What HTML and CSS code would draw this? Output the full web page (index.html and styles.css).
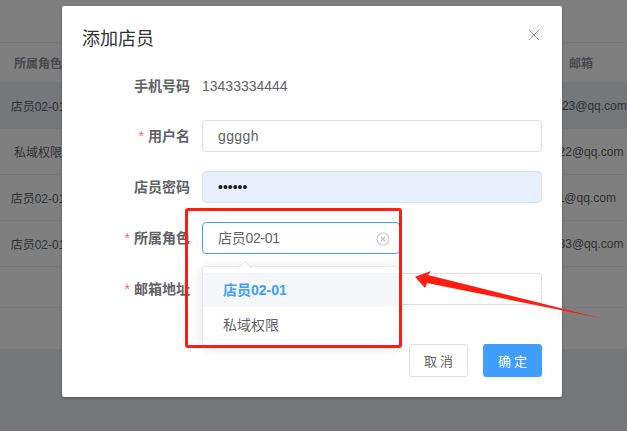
FILE: index.html
```html
<!DOCTYPE html>
<html lang="zh-CN">
<head>
<meta charset="utf-8">
<title>添加店员</title>
<link rel="stylesheet" href="styles.css">
</head>
<body>
<div class="table">
  <div class="row head"><span>所属角色</span><span>邮箱</span></div>
  <div class="row active"><span>店员02-01</span><span>123123@qq.com</span></div>
  <div class="row"><span>私域权限</span><span>12222@qq.com</span></div>
  <div class="row"><span>店员02-01</span><span>111@qq.com</span></div>
  <div class="row"><span>店员02-01</span><span>12333@qq.com</span></div>
  <div class="row blank"></div>
  <div class="pager"></div>
</div>
<div class="mask"></div>
<section class="dialog">
  <header class="dialog-head">
    <h2>添加店员</h2>
    <svg class="close" width="12" height="12" viewBox="0 0 12 12"><path d="M1 1l10 10M11 1L1 11" stroke="#909399" stroke-width="1" fill="none"/></svg>
  </header>
  <form class="form">
    <div class="field first"><label>手机号码</label><div class="value">13433334444</div></div>
    <div class="field"><label><i>*</i>用户名</label><div class="input typed">ggggh</div></div>
    <div class="field"><label>店员密码</label><div class="input filled">••••••</div></div>
    <div class="field"><label><i>*</i>所属角色</label>
      <div class="input focus">店员02-01
        <svg class="clear" width="14" height="14" viewBox="0 0 14 14"><circle cx="7" cy="7" r="6" fill="none" stroke="#c8cbd2" stroke-width="1.1"/><path d="M5 5l4 4M9 5l-4 4" stroke="#c0c4cc" stroke-width="1.3"/></svg>
      </div>
    </div>
    <div class="field"><label><i>*</i>邮箱地址</label><div class="input"></div></div>
  </form>
  <footer class="dialog-foot">
    <button class="btn" type="button">取 消</button>
    <button class="btn primary" type="button">确 定</button>
  </footer>
</section>
<div class="menu">
  <span class="arrow"></span>
  <div class="option on">店员02-01</div>
  <div class="option">私域权限</div>
</div>
<div class="redbox"></div>
<svg class="pointer" width="190" height="50" viewBox="0 0 190 50"><path d="M0 5.700L16 0 13 4 185 47 12 12 10 17z" fill="#ff1c10"/></svg>
</body>
</html>
```
FILE: styles.css
```css
* { box-sizing: border-box; }
html, body { margin: 0; height: 100%; overflow: hidden; }
body {
  width: 627px; height: 431px; position: relative; background: #eceef3;
  font-family: "Liberation Sans", "Noto Sans CJK SC", sans-serif;
  font-size: 14px; color: #606266;
}
.table { width: 641px; height: 349px; padding-top: 42px; background: #fff; font-size: 12px; }
.row {
  display: grid; grid-template-columns: 76px 1fr 120px; height: 46px; align-items: center;
  text-align: center; border-top: 1px solid #ebeef5; white-space: nowrap; color: #606266;
}
.row span:last-child { grid-column: 3; }
.head { height: 40px; color: #909399; background: #fff; }
.head span { font-weight: 700; }
.active { background: #e9f0f7; }
.blank { height: 41px; }
.pager { height: 42px; border-top: 1px solid #ebeef5; }
.mask { position: absolute; inset: 0; background: rgba(0, 0, 0, .5); }
.dialog {
  position: absolute; left: 62px; top: 6px; width: 500px; height: 391px; background: #fff;
  border-radius: 2px; box-shadow: 0 1px 3px rgba(0, 0, 0, .3); display: flex; flex-direction: column;
}
.dialog-head { display: flex; justify-content: space-between; align-items: center; height: 63px; padding: 0 22px 0 20px; }
.dialog-head h2 { margin: -2px 0 0; font-size: 18px; font-weight: 400; color: #303133; line-height: 24px; font-family: "Noto Sans CJK SC", sans-serif; }
.close { margin-top: -6px; }
.form { display: flex; flex-direction: column; gap: 19px; }
.field { display: flex; align-items: center; height: 32px; }
.field label { width: 140px; padding-right: 12px; padding-bottom: 2px; text-align: right; font-weight: 700; color: #606266; font-family: "Noto Sans CJK SC", sans-serif; flex: none; white-space: nowrap; }
.field.first label { padding-bottom: 0; }
.field label i { color: #f56c6c; font-style: normal; font-weight: 400; margin-right: 4px; font-family: "Liberation Sans", sans-serif; }
.value { color: #606266; padding-top: 2px; }
.input {
  position: relative; width: 340px; height: 32px; border: 1px solid #dcdfe6; border-radius: 4px;
  padding: 0 15px; line-height: 30px; color: #606266; background: #fff;
}
.typed { letter-spacing: .4px; }
.filled { background: #e8f0fe; color: #1a1a1a; }
.focus { border-color: #409eff; width: 198px; letter-spacing: -.3px; }
.clear { position: absolute; right: 9px; top: 9px; }
.dialog-foot { margin-top: auto; display: flex; justify-content: flex-end; gap: 15px; padding: 0 20px 20px; }
.btn {
  width: 59px; height: 33px; border: 1px solid #dcdfe6; border-radius: 3px; background: #fff; color: #606266;
  font: 13px "Noto Sans CJK SC", sans-serif; padding: 0;
}
.primary { background: #409eff; border-color: #409eff; color: #fff; }
.menu {
  position: absolute; left: 202px; top: 266px; width: 198px; height: 80px; padding-top: 6px; background: #fff;
  border: 1px solid #e4e7ed; border-radius: 4px; box-shadow: 0 2px 12px rgba(0, 0, 0, .12);
  font-family: "Noto Sans CJK SC", sans-serif;
}
.arrow {
  position: absolute; left: 37px; top: -4px; width: 10px; height: 10px; transform: rotate(45deg);
  background: #fff; border-left: 1px solid #e4e7ed; border-top: 1px solid #e4e7ed;
}
.option { height: 34px; line-height: 34px; padding-left: 20px; color: #606266; position: relative; }
.option.on { background: #f5f7fa; color: #409eff; font-weight: 700; font-family: "Liberation Sans", "Noto Sans CJK SC", sans-serif; }
.redbox { position: absolute; left: 185px; top: 208px; width: 217px; height: 140px; border: 3px solid #ff1c10; border-radius: 3px; }
.pointer { position: absolute; left: 415px; top: 271px; }
```
